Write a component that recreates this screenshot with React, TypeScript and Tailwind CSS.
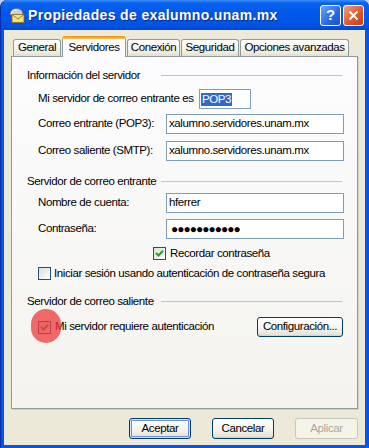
import React from 'react';

// Windows XP style "Propiedades" dialog

const CheckMark = () => (
    <svg width="9" height="9" viewBox="0 0 9 9">
        <path d="M1 4 L3.5 6.5 L8 1.8" stroke="#21a121" strokeWidth={2} fill="none" />
    </svg>
);

const CheckBox = ({ checked }: { checked?: boolean }) => (
    <span className="w-[13px] h-[13px] shrink-0 border border-[#1c5180] bg-[linear-gradient(135deg,#dcdcd7,#ffffff)] flex items-center justify-center">
        {checked && <CheckMark />}
    </span>
);

const GroupLabel = ({ text, className }: { text: string; className?: string }) => (
    <div className={`h-[13px] flex items-center ${className ?? ''}`}>
        <span className="w-[134px] shrink-0 whitespace-nowrap">{text}</span>
        <div className="flex-1 h-px bg-[#c5c4b8] mr-[2px]" />
    </div>
);

const TextRow = ({ label, value, className }: { label: string; value: React.ReactNode; className?: string }) => (
    <div className={`h-[20px] flex items-center pl-[11px] ${className ?? ''}`}>
        <span className="w-[128px] shrink-0 whitespace-nowrap">{label}</span>
        <div className="w-[179px] h-[20px] border border-[#7f9db9] bg-white pl-[2px] flex items-center whitespace-nowrap">
            {value}
        </div>
    </div>
);

const Tab = ({ label, w }: { label: string; w: string }) => (
    <div
        className={`${w} h-[17px] mb-[1px] border border-b-0 border-[#919b9c] rounded-t-[3px] bg-[linear-gradient(180deg,#ffffff,#f1efe6_70%,#e3dfd0)] flex items-center justify-center whitespace-nowrap`}
    >
        {label}
    </div>
);

const TitleIcon = () => (
    <svg width="17" height="16" viewBox="0 0 17 16">
        <path d="M2 8 C2 3 5 1.5 8.5 1.5 C12 1.5 15 3 15 8 Z" fill="#c9cfd8" stroke="#5a6270" strokeWidth={0.8} />
        <path d="M3.5 7 C4 4 6 3 8.5 3" stroke="#ffffff" strokeWidth={1} fill="none" />
        <rect x="4" y="7.5" width="12" height="8" fill="#f6e27a" stroke="#8a6d1a" strokeWidth={0.8} />
        <path d="M4 7.5 L10 12 L16 7.5" stroke="#8a6d1a" strokeWidth={0.8} fill="none" />
    </svg>
);

export default function App() {
    return (
        <div className="w-[369px] h-[448px] overflow-hidden bg-[#c5d3ec] font-['Liberation_Sans',Arial,sans-serif] text-[11.5px] tracking-[-0.4px] text-black">
            <div className="h-full flex flex-col rounded-t-[7px] bg-[#0454e6] border-l border-l-[#0a2ea8]">
                {/* Title bar */}
                <div className="h-[30px] shrink-0 flex items-center pl-[7px] pr-[5px] rounded-t-[7px] bg-[linear-gradient(180deg,#3f8fff_0%,#0a62ef_10%,#0058ea_45%,#0053e2_85%,#0047cf_100%)]">
                    <TitleIcon />
                    <span className="ml-[3px] text-white font-bold text-[14px] tracking-[0.35px] [text-shadow:1px_1px_0_#0c2a8a]">
                        Propiedades de exalumno.unam.mx
                    </span>
                    <div className="ml-auto flex gap-[2px]">
                        <div className="w-[21px] h-[21px] rounded-[3px] border border-white bg-[linear-gradient(135deg,#6aa6ff,#2a66e8_60%,#1b4fd0)] flex items-center justify-center text-white font-bold text-[15px] tracking-normal">
                            ?
                        </div>
                        <div className="w-[21px] h-[21px] rounded-[3px] border border-white bg-[linear-gradient(135deg,#f0a080,#e0582e_55%,#c73a12)] flex items-center justify-center">
                            <svg width="11" height="11" viewBox="0 0 11 11">
                                <path d="M1.5 1.5 L9.5 9.5 M9.5 1.5 L1.5 9.5" stroke="#ffffff" strokeWidth={2} />
                            </svg>
                        </div>
                    </div>
                </div>

                {/* Client area */}
                <div className="flex-1 mr-[4px] ml-[3px] mb-[3px] bg-[#ece9d8] px-[7px] pt-[6px] pb-[6px] flex flex-col">
                    {/* Tabs */}
                    <div className="relative z-10 h-[21px] flex items-end pl-[2px] gap-[1px]">
                        <Tab label="General" w="w-[48px]" />
                        <div className="w-[64px] h-[21px] flex flex-col">
                            <div className="h-[3px] rounded-t-[3px] bg-[linear-gradient(180deg,#e68b2c,#ffc73c)]" />
                            <div className="flex-1 border-x border-[#919b9c] bg-[#fcfcfe] flex items-center justify-center pb-[1px]">
                                Servidores
                            </div>
                        </div>
                        <Tab label="Conexión" w="w-[53px]" />
                        <Tab label="Seguridad" w="w-[58px]" />
                        <Tab label="Opciones avanzadas" w="w-[109px]" />
                    </div>

                    {/* Panel */}
                    <div className="-mt-[1px] h-[353px] border border-[#919b9c] shadow-[1px_1px_0_#d3d0c2] bg-[linear-gradient(180deg,#fcfcfe,#f4f3ee)] pt-[12px] pl-[15px] pr-[13px] flex flex-col">
                        <GroupLabel text="Información del servidor" />

                        <div className="mt-[7px] h-[20px] flex items-center pl-[11px]">
                            <span className="w-[161px] shrink-0 whitespace-nowrap">Mi servidor de correo entrante es</span>
                            <div className="w-[52px] h-[20px] border border-[#7f9db9] bg-white pl-[1px] flex items-center">
                                <span className="bg-[#316ac5] text-white px-[1px] leading-[13px]">POP3</span>
                            </div>
                        </div>

                        <TextRow className="mt-[5px]" label="Correo entrante (POP3):" value="xalumno.servidores.unam.mx" />
                        <TextRow className="mt-[7px]" label="Correo saliente (SMTP):" value="xalumno.servidores.unam.mx" />

                        <GroupLabel className="mt-[14px]" text="Servidor de correo entrante" />

                        <TextRow className="mt-[5px]" label="Nombre de cuenta:" value="hferrer" />
                        <TextRow
                            className="mt-[6px]"
                            label="Contraseña:"
                            value={<span className="text-[12px] tracking-[-1px] pl-[2px]">●●●●●●●●●●●</span>}
                        />

                        <div className="mt-[8px] h-[13px] flex items-center pl-[126px] gap-[4px]">
                            <CheckBox checked />
                            <span className="whitespace-nowrap">Recordar contraseña</span>
                        </div>

                        <div className="mt-[7px] h-[13px] flex items-center pl-[11px] gap-[3px]">
                            <CheckBox />
                            <span className="whitespace-nowrap">Iniciar sesión usando autenticación de contraseña segura</span>
                        </div>

                        <GroupLabel className="mt-[15px]" text="Servidor de correo saliente" />

                        <div className="mt-[9px] h-[20px] flex items-center pl-[11px] gap-[4px] relative">
                            <CheckBox checked />
                            <span className="whitespace-nowrap">Mi servidor requiere autenticación</span>
                            <div className="ml-auto mr-[1px] w-[86px] h-[20px] rounded-[3px] border border-[#003c74] bg-[linear-gradient(180deg,#ffffff,#f3f2ec_60%,#e3ded0)] shadow-[inset_0_-1px_0_#d6d0c5] flex items-center justify-center whitespace-nowrap">
                                Configuración...
                            </div>
                            {/* highlight mark over the checkbox */}
                            <div className="absolute left-[4px] top-[-8px] w-[30px] h-[34px] rounded-full bg-[#ee3a3a]/75" />
                        </div>
                    </div>

                    {/* Dialog buttons */}
                    <div className="mt-[9px] h-[21px] flex justify-end gap-[21px]">
                        <div className="w-[62px] h-[21px] rounded-[3px] border border-[#003c74] bg-[linear-gradient(180deg,#ffffff,#f3f2ec_60%,#e3ded0)] shadow-[inset_0_0_0_1px_#cee7ff,inset_0_0_0_2px_#6d8fe8] flex items-center justify-center">
                            Aceptar
                        </div>
                        <div className="w-[62px] h-[21px] rounded-[3px] border border-[#003c74] bg-[linear-gradient(180deg,#ffffff,#f3f2ec_60%,#e3ded0)] shadow-[inset_0_-1px_0_#d6d0c5] flex items-center justify-center">
                            Cancelar
                        </div>
                        <div className="w-[63px] h-[21px] rounded-[3px] border border-[#c9c7ba] bg-[#f5f4ea] text-[#aca899] flex items-center justify-center">
                            Aplicar
                        </div>
                    </div>
                </div>
            </div>
        </div>
    );
}
